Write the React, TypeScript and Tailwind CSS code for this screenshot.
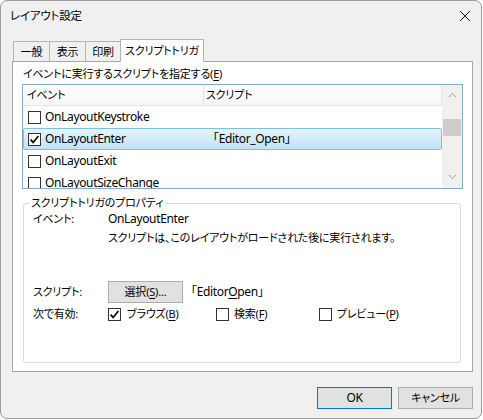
import React from "react";

const jp = "font-['Noto_Sans','Noto_Sans_CJK_JP',sans-serif] [font-feature-settings:'palt'] text-[11px] tracking-[-0.2px]";
const latin = "text-[12px] tracking-[-0.35px] [font-feature-settings:normal]";

function Box({ checked }: { checked: boolean }) {
  return (
    <span className="w-[13px] h-[13px] shrink-0 border border-[#333333] bg-white flex items-center justify-center">
      {checked && (
        <svg width="11" height="11" viewBox="0 0 11 11">
          <path d="M1.6 5.6 L4.1 8.4 L9.4 1.9" stroke="#000" strokeWidth="1.6" fill="none" />
        </svg>
      )}
    </span>
  );
}

function U({ children }: { children: React.ReactNode }) {
  return <span className="underline underline-offset-2">{children}</span>;
}

const rows = [
  { name: "OnLayoutKeystroke", on: false, script: "" },
  { name: "OnLayoutEnter", on: true, script: "「Editor_Open」" },
  { name: "OnLayoutExit", on: false, script: "" },
  { name: "OnLayoutSizeChange", on: false, script: "" },
];

export default function App() {
  return (
    <div className={`w-[483px] h-[420px] bg-white text-black ${jp}`}>
      <div className="w-[482px] h-[419px] rounded-[7px] border border-[#9c9c9c] bg-[#f0f0f0] flex flex-col overflow-hidden">
        {/* title bar */}
        <div className="h-[30px] flex items-center justify-between pl-[9px] pr-[10px] shrink-0">
          <span className="leading-[16px] text-[11.5px]">レイアウト設定</span>
          <svg width="12" height="12" viewBox="0 0 12 12">
            <path d="M1 1 L11 11 M11 1 L1 11" stroke="#1a1a1a" strokeWidth="1" />
          </svg>
        </div>

        {/* tabs */}
        <div className="h-[22px] mt-[8px] flex items-end pl-[12px] shrink-0 whitespace-nowrap">
          <div className="h-[20px] w-[37px] border border-b-0 border-[#b4b4b4] bg-[#f0f0f0] flex items-center justify-center leading-[16px]">一般</div>
          <div className="h-[20px] w-[37px] -ml-px border border-b-0 border-[#b4b4b4] bg-[#f0f0f0] flex items-center justify-center leading-[16px]">表示</div>
          <div className="h-[20px] w-[36px] -ml-px border border-b-0 border-[#b4b4b4] bg-[#f0f0f0] flex items-center justify-center leading-[16px]">印刷</div>
          <div className="relative z-10 h-[23px] w-[84px] -ml-px -mb-px border border-b-0 border-[#b4b4b4] bg-white flex items-center justify-center leading-[16px]">スクリプトトリガ</div>
        </div>

        {/* tab page */}
        <div className="ml-[11px] w-[461px] h-[311px] border border-[#a8a8a8] bg-white shrink-0 pl-[9px] pt-[4px]">
          <div className="leading-[16px] pl-[1px]">
            イベントに実行するスクリプトを指定する(<U>E</U>)
          </div>

          {/* event list */}
          <div className="mt-[2px] w-[441px] h-[105px] border border-[#86a9cd] flex">
            <div className="w-[419px] flex flex-col overflow-hidden">
              <div className="h-[21px] shrink-0 flex border-b border-[#e5e5e5] bg-gradient-to-b from-white to-[#f7f7f7]">
                <div className="w-[181px] border-r border-[#e5e5e5] pl-[4px] flex items-center leading-[16px]">イベント</div>
                <div className="flex-1 pl-[2px] flex items-center leading-[16px] border-r border-[#e5e5e5]">スクリプト</div>
              </div>
              {rows.map((r) => (
                <div
                  key={r.name}
                  className={`h-[22px] shrink-0 flex items-center ${
                    r.on ? "border border-[#7ec1e8] rounded-[2px] bg-gradient-to-b from-[#e3f4fd] to-[#c2e3f7]" : "border border-transparent"
                  }`}
                >
                  <div className="w-[180px] flex items-center pl-[4px]">
                    <Box checked={r.on} />
                    <span className={`ml-[4px] leading-[16px] ${latin}`}>{r.name}</span>
                  </div>
                  <span className={`pl-[3px] leading-[16px] ${latin}`}>{r.script}</span>
                </div>
              ))}
            </div>
            {/* scrollbar */}
            <div className="w-[20px] bg-[#f0f0f0] flex flex-col items-center">
              <svg className="mt-[7px]" width="9" height="6" viewBox="0 0 9 6">
                <path d="M1 5 L4.5 1.5 L8 5" stroke="#a0a0a0" strokeWidth="1" fill="none" />
              </svg>
              <div className="mt-[21px] w-[18px] h-[17px] bg-[#cdcdcd]" />
              <svg className="mt-[38px]" width="9" height="6" viewBox="0 0 9 6">
                <path d="M1 1 L4.5 4.5 L8 1" stroke="#a0a0a0" strokeWidth="1" fill="none" />
              </svg>
            </div>
          </div>

          {/* properties group */}
          <fieldset className="mt-[7px] ml-[1px] w-[438px] h-[167px] border border-[#dcdcdc] rounded-[3px] pl-[9px]">
            <legend className="ml-[-4px] px-[2px] leading-[14px]">スクリプトトリガのプロパティ</legend>
            <div className="mt-[1px] flex leading-[15px]">
              <div className="w-[75px]">イベント:</div>
              <div className="flex flex-col">
                <div className={latin}>OnLayoutEnter</div>
                <div className="mt-[4px]">スクリプトは、このレイアウトがロードされた後に実行されます。</div>
              </div>
            </div>
            <div className="mt-[36px] flex items-center">
              <div className="w-[75px] leading-[16px]">スクリプト:</div>
              <div className="w-[75px] h-[22px] border border-[#adadad] bg-[#e1e1e1] flex items-center justify-center leading-[16px]">
                選択(<U>S</U>)...
              </div>
              <span className={`ml-[2px] leading-[16px] ${latin}`}>
                「Editor<U>O</U>pen」
              </span>
            </div>
            <div className="mt-[3px] flex items-center leading-[16px]">
              <div className="w-[75px]">次で有効:</div>
              <div className="w-[108px] flex items-center">
                <Box checked />
                <span className="ml-[6px]">ブラウズ(<U>B</U>)</span>
              </div>
              <div className="w-[103px] flex items-center">
                <Box checked={false} />
                <span className="ml-[5px]">検索(<U>F</U>)</span>
              </div>
              <div className="flex items-center">
                <Box checked={false} />
                <span className="ml-[5px]">プレビュー(<U>P</U>)</span>
              </div>
            </div>
          </fieldset>
        </div>

        {/* dialog buttons */}
        <div className="mt-[15px] flex justify-end gap-[6px] pr-[8px]">
          <button className="w-[75px] h-[22px] border border-[#0078d7] bg-[#e1e1e1] flex items-center justify-center leading-[16px]">
            <span className={latin}>OK</span>
          </button>
          <button className="w-[75px] h-[22px] border border-[#adadad] bg-[#e1e1e1] flex items-center justify-center leading-[16px]">
            キャンセル
          </button>
        </div>
      </div>
    </div>
  );
}
